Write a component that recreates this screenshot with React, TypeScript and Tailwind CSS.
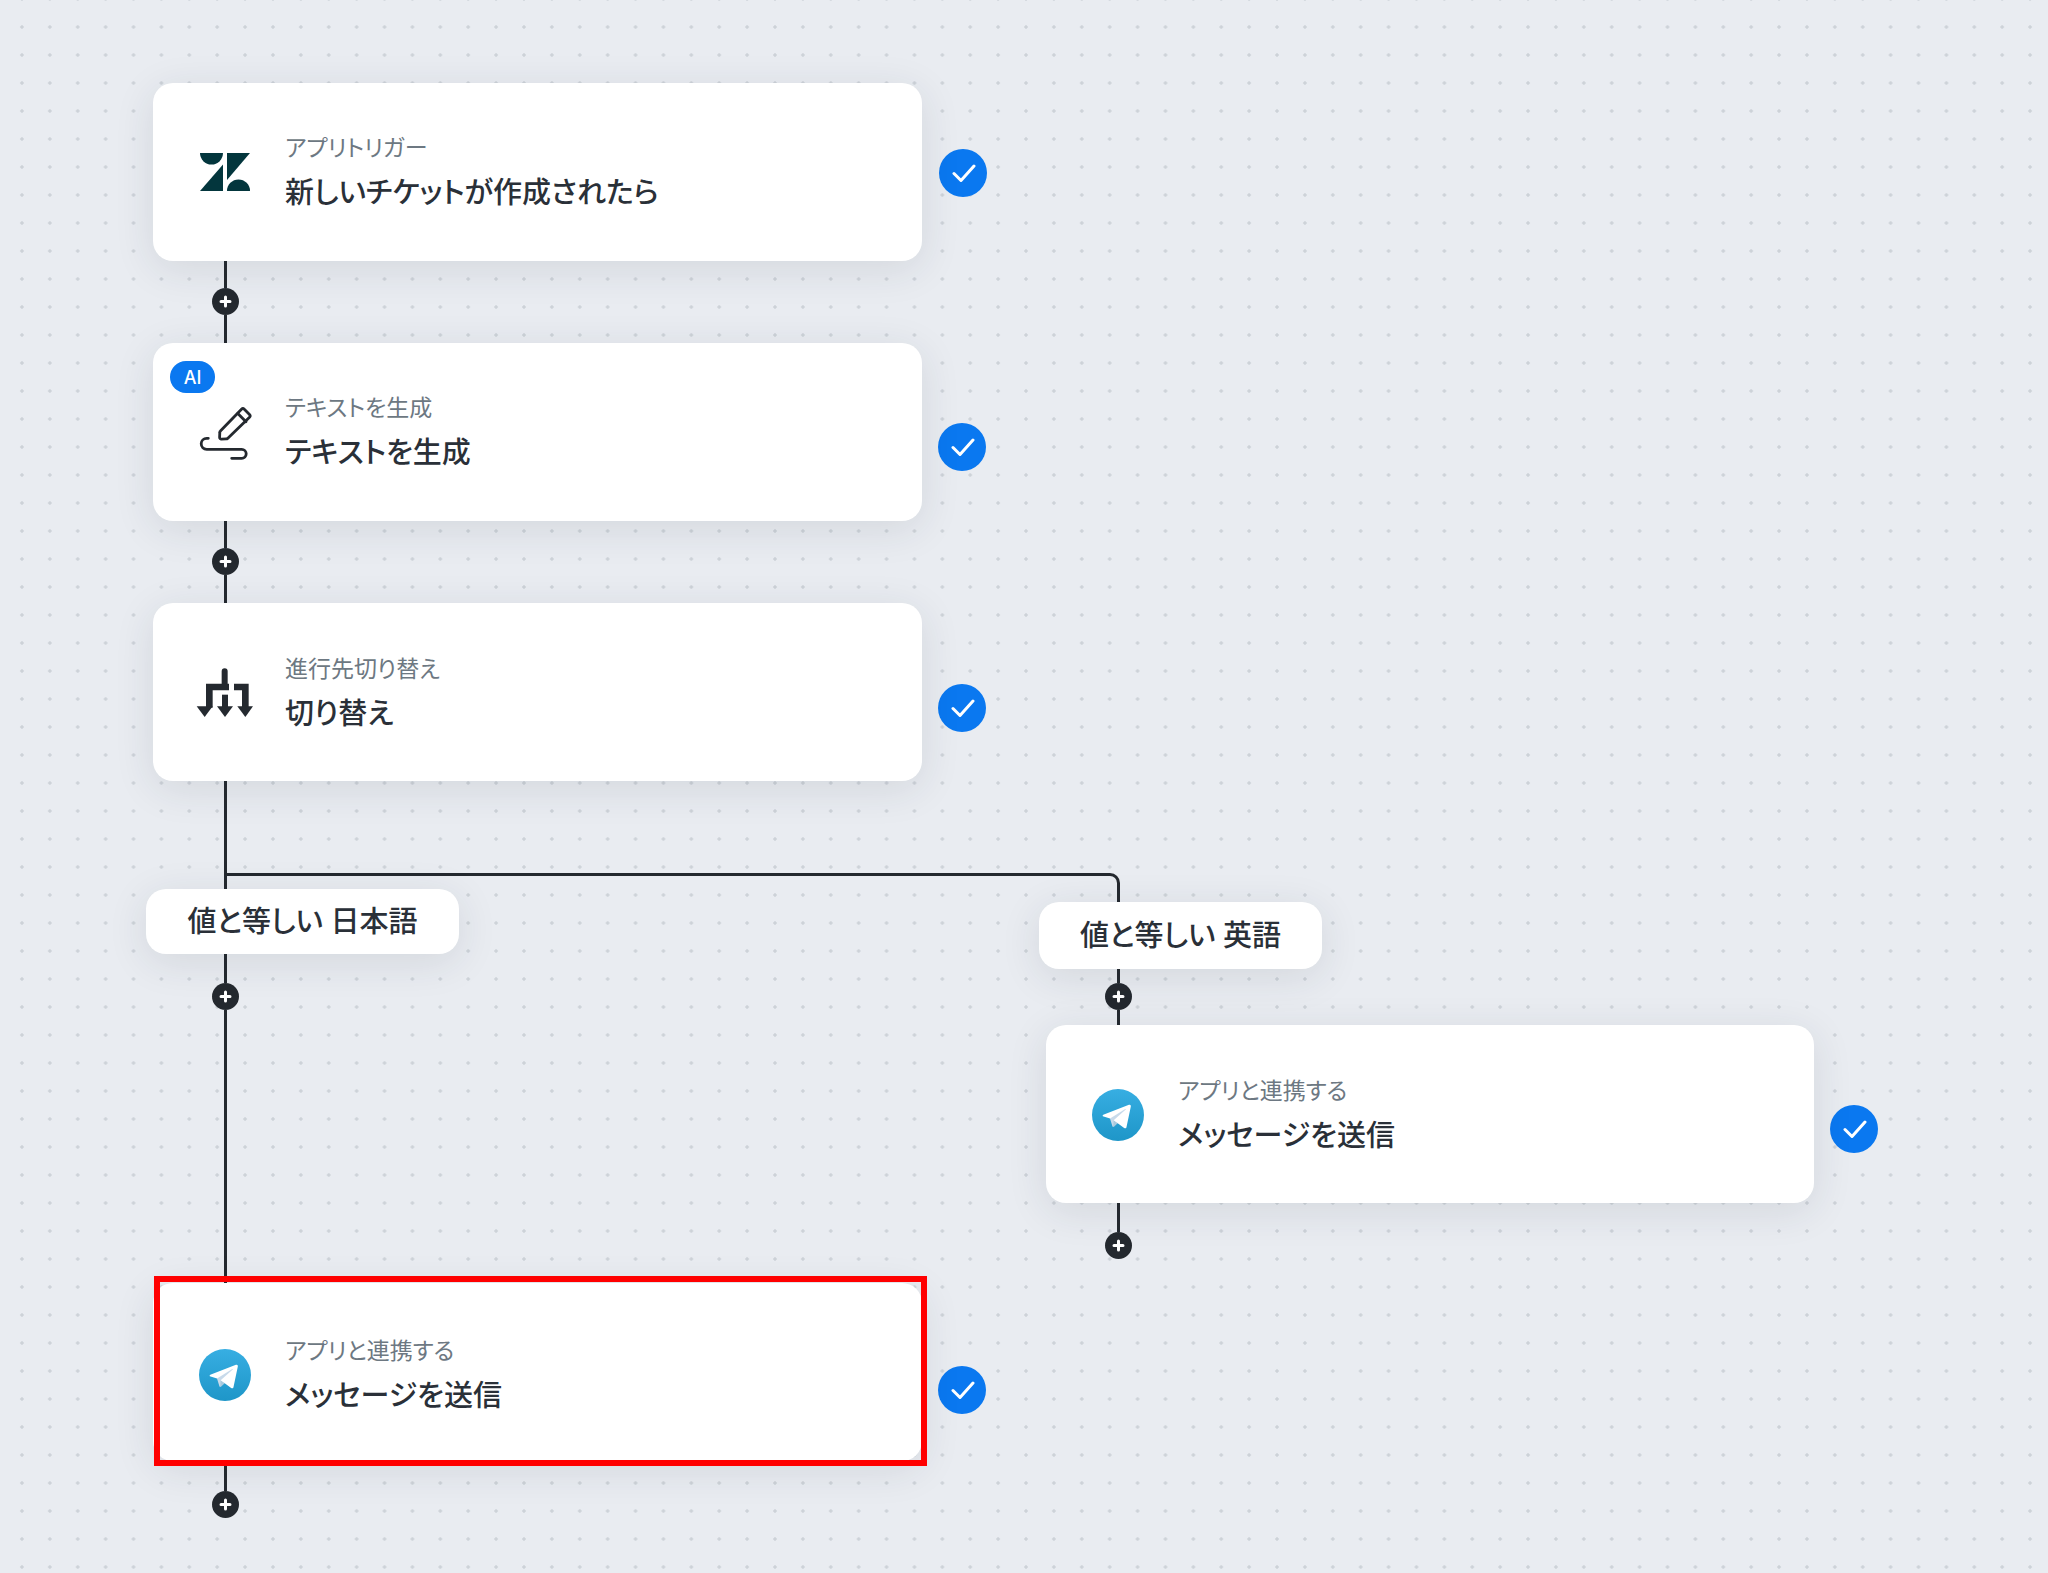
import React from "react";

const ZendeskIcon = () => (
  <svg width="50" height="38" viewBox="0 0 50 38" fill="#03363d">
    <path d="M0 0H23A11.5 11.5 0 0 1 0 0Z" />
    <path d="M23 11.5V38H0Z" />
    <path d="M27 0H50L27 27Z" />
    <path d="M27 38A11.5 11.5 0 0 1 50 38Z" />
  </svg>
);

const PenIcon = () => (
  <svg width="60" height="60" viewBox="0 0 60 60" fill="none" stroke="#24292f" strokeWidth="2.8" strokeLinecap="round" strokeLinejoin="round">
    <path d="M46.5 7.2a2 2 0 0 1 2.8 0l5.2 5.2a2 2 0 0 1 0 2.8L32.6 36.4a2 2 0 0 1-1.3.5l-5 .2a1.6 1.6 0 0 1-1.7-1.7l.2-5a2 2 0 0 1 .6-1.4Z" />
    <path d="M42.8 11.4l8.2 8.4" />
    <path d="M13.3 36.3h-1.6a5.4 5.4 0 0 0 0 11h35a4.5 4.5 0 0 1 0 9h-10" />
  </svg>
);

const SwitchIcon = () => (
  <svg width="60" height="54" viewBox="165 200 180 160" fill="#24292f">
    <path d="M245 215a9 9 0 0 1 18 0v37h4v20h-49v52h-20v-72h47Z" />
    <path d="M282 252h44v72h-20v-52h-24Z" />
    <path d="M246 285h18v40h-18Z" />
    <path d="M170 320h48l-24 32Z" />
    <path d="M231 320h48l-24 32Z" />
    <path d="M292 320h47l-23 32Z" />
  </svg>
);

const TelegramIcon = ({ id }: { id: string }) => (
  <svg width="52" height="52" viewBox="0 0 240 240">
    <defs>
      <linearGradient id={id} x1="0.5" y1="0" x2="0.5" y2="1">
        <stop offset="0" stopColor="#37aee2" />
        <stop offset="1" stopColor="#1e96c8" />
      </linearGradient>
    </defs>
    <circle cx="120" cy="120" r="120" fill={`url(#${id})`} />
    <path fill="#c8daea" d="M98 175c-3.888 0-3.227-1.468-4.568-5.17L82 132.207 170 80" />
    <path fill="#a9c9dd" d="M98 175c3 0 4.325-1.372 6-3l16-15.558-19.958-12.035" />
    <path fill="#fff" d="M100.04 144.41l48.36 35.729c5.519 3.045 9.501 1.468 10.876-5.123l19.685-92.763c2.015-8.08-3.08-11.746-8.36-9.349l-115.59 44.571c-7.89 3.165-7.843 7.567-1.438 9.528l29.663 9.259 68.673-43.325c3.242-1.966 6.218-.91 3.776 1.258" />
  </svg>
);

const Card = ({ className, icon, sub, title, children }: any) => (
  <div className={`relative flex h-[178px] items-center rounded-[20px] bg-white pl-[42px] shadow-[0_8px_40px_rgba(35,45,65,0.11)] ${className}`}>
    <div className="flex w-[60px] items-center justify-center">{icon}</div>
    <div className="ml-[30px] flex flex-col gap-[13px]">
      <p className="text-[23px] leading-[28px] text-[#6d7882] [font-feature-settings:'palt']">{sub}</p>
      <p className="text-[29px] leading-[36px] font-medium text-[#2a3038] [font-feature-settings:'palt']">{title}</p>
    </div>
    {children}
  </div>
);

const Check = ({ className }: { className: string }) => (
  <div className={`flex h-[48px] w-[48px] items-center justify-center rounded-full bg-[#0a78f0] ${className}`}>
    <svg width="26" height="26" viewBox="0 0 26 26" fill="none" stroke="#fff" strokeWidth="3" strokeLinecap="round" strokeLinejoin="round">
      <path d="M4 13.5l7 7L24 6" />
    </svg>
  </div>
);

const Plus = () => (
  <div className="flex h-[27px] w-[27px] shrink-0 items-center justify-center rounded-full bg-[#24292f]">
    <svg width="13" height="13" viewBox="0 0 13 13" stroke="#fff" strokeWidth="3" strokeLinecap="round">
      <path d="M6.5 2v9M2 6.5h9" />
    </svg>
  </div>
);

// line, plus button, line: the spacer between two nodes
const Connector = ({ className, top, bottom }: any) => (
  <div className={`flex w-[27px] flex-col items-center ${className}`}>
    <div className={`w-[3px] bg-[#24292f] ${top}`} />
    <Plus />
    <div className={`w-[3px] bg-[#24292f] ${bottom}`} />
  </div>
);

const Label = ({ className, children }: any) => (
  <div className={`relative z-10 flex items-center justify-center rounded-[20px] bg-white text-[29px] font-medium text-[#2a3038] [font-feature-settings:'palt'] shadow-[0_8px_40px_rgba(35,45,65,0.11)] ${className}`}>
    {children}
  </div>
);

export default function App() {
  return (
    <div className="relative flex h-[1573px] w-[2048px] overflow-hidden bg-[#e9ecf1] bg-[radial-gradient(circle,#cdd2d8_1.4px,transparent_2px)] bg-[length:27.9px_28px] bg-[position:8px_13px] pt-[83px] pl-[153px] font-['Inter','Noto_Sans_CJK_JP','Noto_Sans',sans-serif]">
      {/* branch line running over to the second column */}
      <div className="absolute top-[873px] left-[225px] h-[29px] w-[895px] rounded-tr-[10px] border-t-[3px] border-r-[3px] border-[#24292f]" />

      <div className="flex w-[886px] shrink-0 flex-col">
        <div className="flex h-[177px] items-start gap-[17px]">
          <Card className="w-[769px]" icon={<ZendeskIcon />} sub="アプリトリガー" title="新しいチケットが作成されたら" />
          <Check className="mt-[66px]" />
        </div>
        <Connector className="ml-[59px]" top="h-[28px]" bottom="h-[28px]" />

        <div className="flex items-start gap-[16px]">
          <Card className="w-[769px]" icon={<PenIcon />} sub="テキストを生成" title="テキストを生成">
            <div className="absolute top-[18px] left-[17px] flex h-[32px] w-[45px] items-center justify-center rounded-full bg-[#0a78f0] text-[18px] font-medium text-white">
              AI
            </div>
          </Card>
          <Check className="mt-[80px]" />
        </div>
        <Connector className="ml-[59px]" top="h-[27px]" bottom="h-[28px]" />

        <div className="flex items-start gap-[16px]">
          <Card className="w-[769px] pt-[2px]" icon={<SwitchIcon />} sub="進行先切り替え" title="切り替え" />
          <Check className="mt-[81px]" />
        </div>
        <div className="ml-[71px] h-[108px] w-[3px] bg-[#24292f]" />

        <Label className="-ml-[7px] h-[65px] w-[313px]">値と等しい 日本語</Label>
        <Connector className="ml-[59px]" top="h-[29px]" bottom="h-[273px]" />

        <div className="flex items-start gap-[16px]">
          <Card className="w-[769px] pt-[6px]" icon={<TelegramIcon id="tg-b" />} sub="アプリと連携する" title="メッセージを送信" />
          <Check className="mt-[83px]" />
        </div>
        <Connector className="ml-[59px]" top="h-[30px]" bottom="h-0" />
      </div>

      <div className="mt-[819px] flex flex-col">
        <Label className="h-[67px] w-[283px]">値と等しい 英語</Label>
        <Connector className="ml-[66px]" top="h-[14px]" bottom="h-[15px]" />
        <div className="ml-[7px] flex items-start gap-[16px]">
          <Card className="w-[768px] pt-[2px]" icon={<TelegramIcon id="tg-a" />} sub="アプリと連携する" title="メッセージを送信" />
          <Check className="mt-[80px]" />
        </div>
        <Connector className="ml-[66px]" top="h-[29px]" bottom="h-0" />
      </div>

      {/* review highlight around the last node */}
      <div className="absolute top-[1276px] left-[154px] z-20 h-[190px] w-[773px] border-[6px] border-[#ff0000]" />
    </div>
  );
}
